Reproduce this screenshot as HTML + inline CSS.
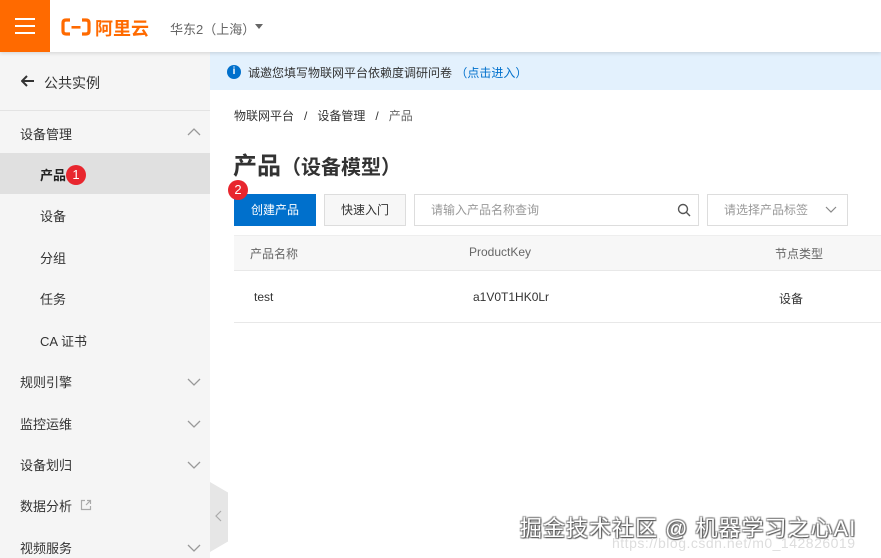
<!DOCTYPE html>
<html><head><meta charset="utf-8">
<style>
*{margin:0;padding:0;box-sizing:border-box}
body{width:881px;height:558px;overflow:hidden;background:#fff;font-family:"Liberation Sans","Noto Sans CJK SC",sans-serif;position:relative;color:#333}
.a{position:absolute;white-space:nowrap}
.side{position:absolute;left:0;top:52px;width:210px;height:506px;background:#f5f5f5}
.mi{position:absolute;left:20px;font-size:13px;color:#333}
.sub{position:absolute;left:40px;font-size:13px;color:#333}
.chev{position:absolute;left:187px;width:14px;height:8px}
</style></head><body>
<div class="a" style="left:0;top:0;width:881px;height:52px;background:#fff;box-shadow:0 1px 4px rgba(0,0,0,.15);z-index:2"></div>
<div class="a" style="left:0;top:0;width:50px;height:52px;background:#ff6a00;z-index:3">
 <div class="a" style="left:15px;top:18px;width:20px;height:2px;background:#fff"></div>
 <div class="a" style="left:15px;top:25px;width:20px;height:2px;background:#fff"></div>
 <div class="a" style="left:15px;top:32px;width:20px;height:2px;background:#fff"></div>
</div>
<svg class="a" style="left:61px;top:18px;z-index:3" width="30" height="18" viewBox="0 0 30 18"><path d="M9 2H5Q2 2 2 5v8q0 3 3 3h4M21 2h4q3 0 3 3v8q0 3-3 3h-4" fill="none" stroke="#ff6a00" stroke-width="3.2"/><rect x="10.5" y="8" width="9" height="2.6" fill="#ff6a00"/></svg>
<div class="a" style="left:95px;top:15px;font-size:18px;font-weight:bold;color:#ff6a00;z-index:3">阿里云</div>
<div class="a" style="left:170px;top:19px;font-size:13px;color:#666;z-index:3">华东2（上海）</div>
<div class="a" style="left:255px;top:24px;width:0;height:0;border-left:4px solid transparent;border-right:4px solid transparent;border-top:5px solid #666;z-index:3"></div>

<div class="side">
 <svg class="a" style="left:21px;top:23px" width="14" height="12" viewBox="0 0 14 12"><path d="M13 6H2M6 1L1 6l5 5" fill="none" stroke="#333" stroke-width="2"/></svg>
 <div class="a" style="left:44px;top:21px;font-size:14px">公共实例</div>
 <div class="a" style="left:0;top:58px;width:210px;height:1px;background:#e3e3e3"></div>
 <div class="mi" style="top:72px">设备管理</div>
 <svg class="chev" style="top:76px" viewBox="0 0 14 8"><path d="M1 7l6-6 6 6" fill="none" stroke="#999" stroke-width="1.3"/></svg>
 <div class="a" style="left:0;top:101px;width:210px;height:41px;background:#e0e0e0"></div>
 <div class="sub" style="top:113px;font-weight:bold;color:#222">产品</div>
 <div class="a" style="left:66px;top:113px;width:20px;height:20px;border-radius:50%;background:#e8262e;color:#fff;font-size:13px;text-align:center;line-height:20px">1</div>
 <div class="sub" style="top:154px">设备</div>
 <div class="sub" style="top:196px">分组</div>
 <div class="sub" style="top:237px">任务</div>
 <div class="sub" style="top:279px">CA 证书</div>
 <div class="mi" style="top:320px">规则引擎</div>
 <svg class="chev" style="top:326px" viewBox="0 0 14 8"><path d="M1 1l6 6 6-6" fill="none" stroke="#999" stroke-width="1.3"/></svg>
 <div class="mi" style="top:362px">监控运维</div>
 <svg class="chev" style="top:368px" viewBox="0 0 14 8"><path d="M1 1l6 6 6-6" fill="none" stroke="#999" stroke-width="1.3"/></svg>
 <div class="mi" style="top:403px">设备划归</div>
 <svg class="chev" style="top:409px" viewBox="0 0 14 8"><path d="M1 1l6 6 6-6" fill="none" stroke="#999" stroke-width="1.3"/></svg>
 <div class="mi" style="top:444px">数据分析</div>
 <svg class="a" style="left:80px;top:447px" width="12" height="12" viewBox="0 0 12 12"><path d="M5 1.5H1.5v9h9V7M7 1.5h3.5V5M10.5 1.5L6 6" fill="none" stroke="#aaa" stroke-width="1.2"/></svg>
 <div class="mi" style="top:486px">视频服务</div>
 <svg class="chev" style="top:492px" viewBox="0 0 14 8"><path d="M1 1l6 6 6-6" fill="none" stroke="#999" stroke-width="1.3"/></svg>
</div>
<div class="a" style="left:210px;top:482px;width:18px;height:70px;background:#e6e6e6;clip-path:polygon(0 0,100% 15%,100% 85%,0 100%)"></div>
<svg class="a" style="left:215px;top:510px" width="7" height="12" viewBox="0 0 7 12"><path d="M6 1L1 6l5 5" fill="none" stroke="#aaa" stroke-width="1.2"/></svg>

<div class="a" style="left:210px;top:52px;width:671px;height:38px;background:#e3f1fd"></div>
<div class="a" style="left:227px;top:65px;width:14px;height:14px;border-radius:50%;background:#0070cc;color:#fff;font-size:10px;font-weight:bold;text-align:center;line-height:14px">i</div>
<div class="a" style="left:248px;top:64px;font-size:12px;color:#333">诚邀您填写物联网平台依赖度调研问卷 <span style="color:#0070cc">（点击进入）</span></div>

<div class="a" style="left:234px;top:107px;font-size:12px;color:#333">物联网平台 &nbsp;&nbsp;/&nbsp;&nbsp; 设备管理 &nbsp;&nbsp;/&nbsp;&nbsp; <span style="color:#666">产品</span></div>
<div class="a" style="left:233px;top:146px;font-size:24px;font-weight:bold;color:#333">产品<span style="font-size:20px">（设备模型）</span></div>

<div class="a" style="left:234px;top:194px;width:82px;height:32px;background:#0070cc;color:#fff;font-size:12px;text-align:center;line-height:32px">创建产品</div>
<div class="a" style="left:228px;top:180px;width:20px;height:20px;border-radius:50%;background:#e8262e;color:#fff;font-size:13px;text-align:center;line-height:20px">2</div>
<div class="a" style="left:324px;top:194px;width:82px;height:32px;background:#f7f7f7;border:1px solid #ddd;font-size:12px;text-align:center;line-height:30px;color:#333">快速入门</div>
<div class="a" style="left:414px;top:194px;width:285px;height:32px;border:1px solid #ddd;font-size:12px;line-height:30px;color:#999;padding-left:16px">请输入产品名称查询</div>
<svg class="a" style="left:677px;top:203px" width="14" height="14" viewBox="0 0 14 14"><circle cx="6" cy="6" r="4.5" fill="none" stroke="#555" stroke-width="1.4"/><path d="M9.3 9.3L13 13" stroke="#555" stroke-width="1.4"/></svg>
<div class="a" style="left:707px;top:194px;width:141px;height:32px;border:1px solid #ddd;font-size:12px;line-height:30px;color:#999;padding-left:16px">请选择产品标签</div>
<svg class="a" style="left:825px;top:206px" width="12" height="7" viewBox="0 0 12 7"><path d="M1 1l5 5 5-5" fill="none" stroke="#888" stroke-width="1.2"/></svg>

<div class="a" style="left:234px;top:235px;width:647px;height:36px;background:#f7f7f7;border-top:1px solid #eee;border-bottom:1px solid #e8e8e8"></div>
<div class="a" style="left:250px;top:245px;font-size:12px;color:#666">产品名称</div>
<div class="a" style="left:469px;top:245px;font-size:12px;color:#666">ProductKey</div>
<div class="a" style="left:775px;top:245px;font-size:12px;color:#666">节点类型</div>
<div class="a" style="left:254px;top:290px;font-size:12px;color:#333">test</div>
<div class="a" style="left:473px;top:290px;font-size:12px;color:#333">a1V0T1HK0Lr</div>
<div class="a" style="left:779px;top:290px;font-size:12px;color:#333">设备</div>
<div class="a" style="left:234px;top:322px;width:647px;height:1px;background:#e8e8e8"></div>

<div class="a" style="left:520px;top:511px;font-size:22px;letter-spacing:1px;color:#fff;text-shadow:1px 1px 1px #555,-1px -1px 1px #888,1px -1px 1px #888,-1px 1px 1px #888">掘金技术社区 @ 机器学习之心AI</div>
<div class="a" style="left:612px;top:535px;font-size:14px;color:#ddd;letter-spacing:0.5px">https://blog.csdn.net/m0_142826019</div>
</body></html>
